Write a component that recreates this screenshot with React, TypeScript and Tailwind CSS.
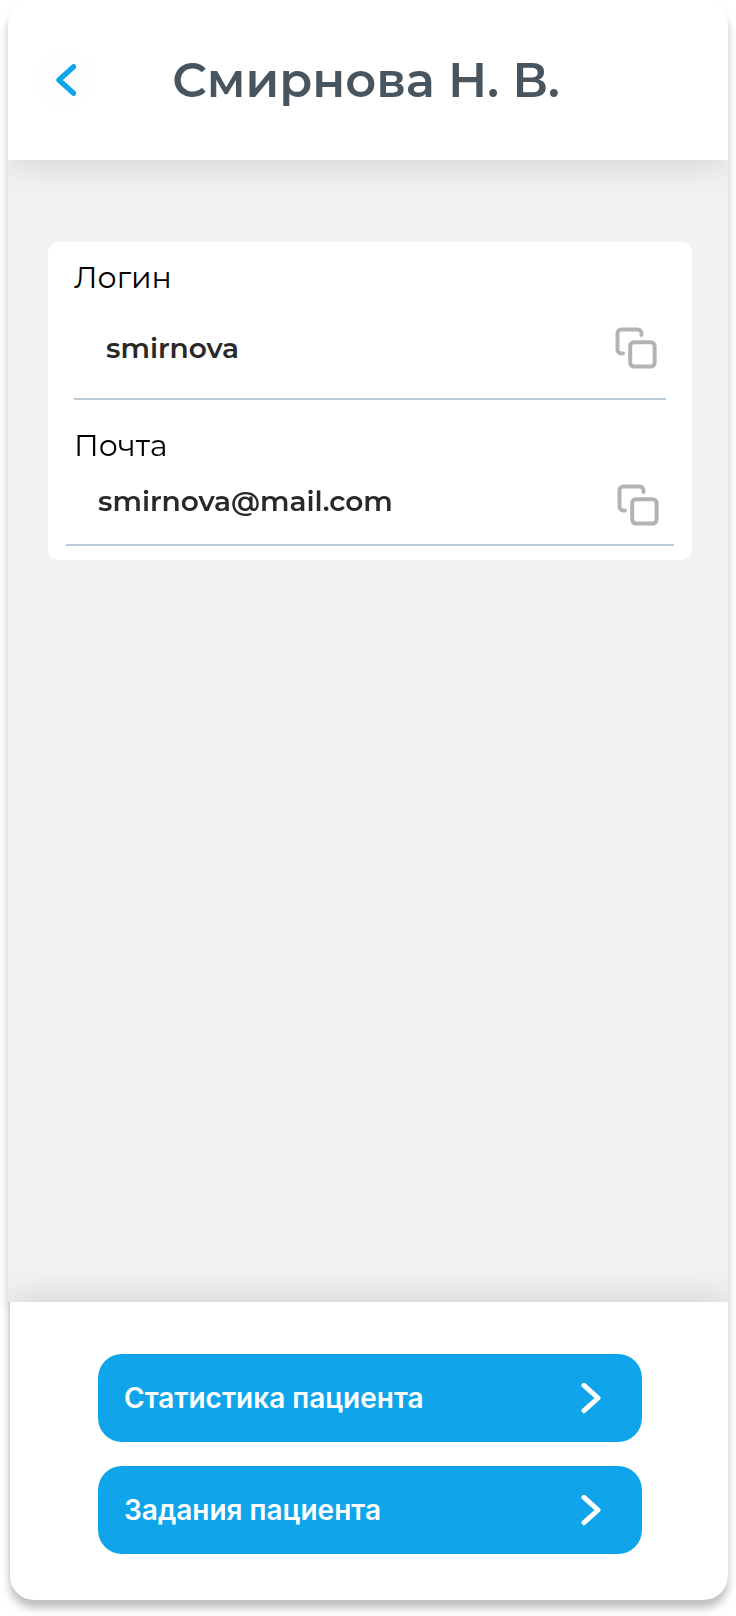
function ChevronLeft() {
  return (
    <svg className="h-8 w-5" viewBox="0 0 20 32" fill="none" stroke="currentColor" strokeWidth="5.2" strokeLinecap="round" strokeLinejoin="round" aria-hidden="true">
      <path d="M17.6 2.7 2.9 16l14.7 13.3" />
    </svg>
  );
}

function ChevronRight() {
  return (
    <svg className="h-8 w-5" viewBox="0 0 20 32" fill="none" stroke="currentColor" strokeWidth="5" strokeLinecap="round" strokeLinejoin="round" aria-hidden="true">
      <path d="M3 3.4 17 16 3 28.6" />
    </svg>
  );
}

function CopyIcon() {
  return (
    <svg className="size-[42px]" viewBox="0 0 42 42" fill="none" stroke="currentColor" strokeWidth="4" strokeLinecap="round" strokeLinejoin="round" aria-hidden="true">
      <path d="M8 26.5H6.3a3.8 3.8 0 0 1-3.8-3.8V6.3a3.8 3.8 0 0 1 3.8-3.8h16.4a3.8 3.8 0 0 1 3.8 3.8V8" />
      <rect x="15.2" y="15.2" width="24.4" height="24.4" rx="3.8" />
    </svg>
  );
}

const actions = ["Статистика пациента", "Задания пациента"];

export default function App() {
  return (
    <div className="flex min-h-screen flex-col bg-white px-2 pb-4 font-[Montserrat,Inter,sans-serif]">
      <div className="flex flex-1 flex-col drop-shadow-[0_8px_4px_rgba(0,0,0,0.25)]">
        <div className="flex flex-1 flex-col overflow-hidden rounded-3xl">
          <header className="relative z-10 grid h-40 grid-cols-[68px_1fr_72px] items-center bg-white px-6 shadow-[0_8px_32px_rgba(0,0,0,0.11)]">
            <button type="button" aria-label="Назад" className="flex size-[68px] items-center justify-center rounded-full bg-[radial-gradient(closest-side,#fbfbfb,#ffffff)] text-[#10a5ea]">
              <ChevronLeft />
            </button>
            <h1 className="text-center text-5xl leading-[60px] font-semibold whitespace-nowrap text-[#48545e]">Смирнова Н. В.</h1>
          </header>

          <main className="flex-1 bg-[#f3f1f2] pt-[82px] pr-9 pb-10 pl-10">
            <dl className="rounded-[10px] bg-white px-[18px] pt-[18px] pb-[14px]">
              <div className="mx-2 border-b-2 border-[#bdcad9]">
                <dt className="text-3xl leading-9 font-normal text-black">Логин</dt>
                <dd className="flex h-[102px] items-center justify-between pt-0.5 pr-[9px] pl-8 text-[28px] font-semibold text-[#292929]">
                  <span>smirnova</span>
                  <button type="button" aria-label="Скопировать логин" className="text-[#b3b3b3]"><CopyIcon /></button>
                </dd>
              </div>
              <div className="border-b-2 border-[#bdcad9] pt-7">
                <dt className="px-2 text-3xl leading-9 font-normal text-black">Почта</dt>
                <dd className="flex h-20 items-center justify-between pt-0.5 pr-[15px] pl-8 text-[28px] font-semibold text-[#292929]">
                  <span className="pb-2">smirnova@mail.com</span>
                  <button type="button" aria-label="Скопировать почту" className="text-[#b3b3b3]"><CopyIcon /></button>
                </dd>
              </div>
            </dl>
          </main>

          <footer className="relative ml-0.5 flex flex-col gap-6 rounded-b-3xl bg-white pt-[52px] pr-[86px] pb-[46px] pl-[88px] shadow-[0_-8px_32px_rgba(0,0,0,0.11)]">
            {actions.map((label) => (
              <button key={label} type="button" className="flex h-[88px] items-center justify-between rounded-3xl bg-[#10a5ea] pr-[41px] pl-[26px] font-[Inter,sans-serif] text-[28px] font-semibold text-white">
                <span>{label}</span>
                <ChevronRight />
              </button>
            ))}
          </footer>
        </div>
      </div>
    </div>
  );
}
